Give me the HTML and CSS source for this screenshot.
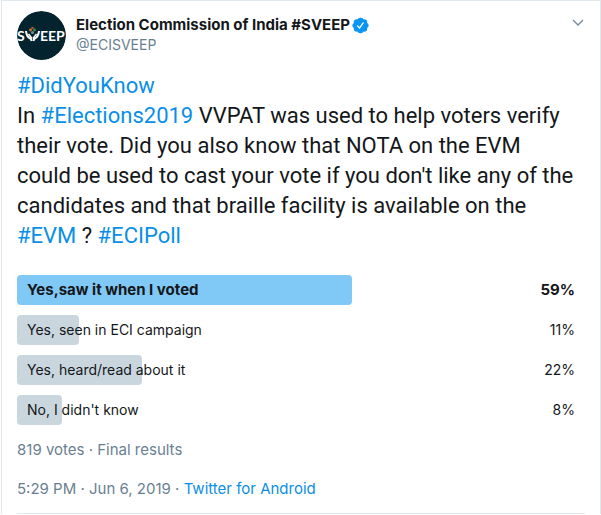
FILE: index.html
```html
<!DOCTYPE html>
<html lang="en">
<head>
    <meta charset="UTF-8">
    <meta name="viewport" content="width=device-width, initial-scale=1.0">
    <title>Election Commission of India #SVEEP</title>
    <link rel="stylesheet" href="styles.css">
</head>
<body>
    <article class="tweet">
        <header class="tweet-header">
            <svg class="avatar" viewBox="0 0 49 49" role="img" aria-label="SVEEP">
                <circle cx="24.5" cy="24.5" r="24.5" fill="#03242f"/>
                <g class="avatar-text">
                    <text x="0" y="30">S</text>
                    <text x="23" y="30">EEP</text>
                </g>
                <path d="M9 20c.3 4.500 1.500 6.500 5 8l.5 2M22 20c-.3 4.500-1.500 6.500-5 8l-.5 2" fill="none" stroke="#fff" stroke-width="2"/>
                <path d="M11.500 23l3.500 4.500M19.500 23L16 27.500" fill="none" stroke="#fff" stroke-width="1.500"/>
                <circle cx="13.500" cy="19" r="1.400" fill="#d8743c"/>
                <circle cx="15.500" cy="17" r="1.300" fill="#a9573c"/>
                <circle cx="17.500" cy="19" r="1.400" fill="#3d8b50"/>
                <circle cx="15.500" cy="21.500" r="1.500" fill="#7d8d92"/>
            </svg>
            <div class="author">
                <div class="author-name">
                    <span>Election Commission of India #SVEEP</span>
                    <svg class="verified" viewBox="0 0 24 24" role="img" aria-label="Verified account">
                        <path fill="#0a95f5" d="M23.500 12c0-1.600-.9-2.900-2.200-3.600.5-1.400.2-3-.9-4.100s-2.700-1.400-4.100-.9C15.600 2 14.200 1 12.500 1h-1C9.800 1 8.400 2 7.700 3.400c-1.400-.5-3-.2-4.100.9s-1.400 2.700-.9 4.100C1.400 9.100.5 10.400.5 12s.9 2.900 2.200 3.600c-.5 1.400-.2 3 .9 4.100s2.700 1.400 4.100.9C8.400 22 9.800 23 11.500 23h1c1.700 0 3.100-1 3.800-2.400 1.400.5 3 .2 4.100-.9s1.400-2.700.9-4.100c1.300-.7 2.200-2 2.200-3.600z"/>
                        <path fill="none" stroke="#fff" stroke-width="1.800" stroke-linecap="round" stroke-linejoin="round" d="M7.800 12.500l3 3 5-7.200"/>
                    </svg>
                </div>
                <div class="author-handle">@ECISVEEP</div>
            </div>
            <button class="menu-button" type="button" aria-label="More">
                <svg viewBox="0 0 12 8"><path d="M1 1l5 5 5-5" fill="none" stroke="#73879a" stroke-width="1.300"/></svg>
            </button>
        </header>

        <p class="tweet-text">
            <a href="#">#DidYouKnow</a><br>
            In <a href="#">#Elections2019</a> VVPAT was used to help voters verify their vote. Did you also know that NOTA on the EVM<br>
            could be used to cast your vote if you don't like any of the candidates and that braille facility is available on the <a href="#">#EVM</a> ? <a href="#">#ECIPoll</a>
        </p>

        <ul class="poll">
            <li class="poll-option winner">
                <div class="bar" style="width: 59%"></div>
                <span class="choice">Yes,saw it when I voted</span>
                <span class="percent">59%</span>
            </li>
            <li class="poll-option">
                <div class="bar" style="width: 11%"></div>
                <span class="choice">Yes, seen in ECI campaign</span>
                <span class="percent">11%</span>
            </li>
            <li class="poll-option">
                <div class="bar" style="width: 22%"></div>
                <span class="choice">Yes, heard/read about it</span>
                <span class="percent">22%</span>
            </li>
            <li class="poll-option">
                <div class="bar" style="width: 8%"></div>
                <span class="choice">No, I didn't know</span>
                <span class="percent">8%</span>
            </li>
        </ul>

        <div class="poll-summary">819 votes · Final results</div>
        <div class="tweet-meta">5:29 PM · Jun 6, 2019 · <a href="#">Twitter for Android</a></div>
    </article>
</body>
</html>
```
FILE: styles.css
```css
body {
    margin: 0;
    background-color: #fff;
    color: #14171a;
    font-family: Inter, "Liberation Sans", sans-serif;
    font-size: 14px;
    line-height: 20px;
}
a {
    color: #0a8fe6;
    text-decoration: none;
}
a:hover {
    text-decoration: underline;
}
.tweet {
    margin-left: 1px;
    padding: 10px 15px 0;
    border: 1px solid #e1e8ed;
    border-bottom: none;
}
.tweet-header {
    display: flex;
    align-items: flex-start;
    gap: 10px;
}
.avatar {
    width: 49px;
    height: 49px;
    border-radius: 50%;
    flex-shrink: 0;
}
.avatar-text {
    fill: #fff;
    font-family: Lato, sans-serif;
    font-size: 14px;
    font-weight: 700;
}
.author {
    flex: 1;
    padding-top: 4px;
}
.author-name {
    display: flex;
    align-items: center;
    gap: 2px;
    font-size: 15px;
    font-weight: 700;
}
.verified {
    width: 17px;
    height: 17px;
}
.author-handle {
    color: #697f91;
}
.menu-button {
    margin: 8px 1px 0 0;
    padding: 0;
    border: none;
    background: none;
    line-height: 0;
    cursor: pointer;
}
.menu-button svg {
    width: 12px;
    height: 8px;
}
.tweet-text {
    margin: 11px 0 24px;
    font-family: Roboto, "Liberation Sans", sans-serif;
    font-size: 22px;
    line-height: 30px;
}
.poll {
    display: grid;
    gap: 10px;
    margin: 0;
    padding: 0;
    list-style: none;
}
.poll-option {
    display: grid;
    grid-template-columns: 1fr auto;
    line-height: 30px;
}
.bar {
    grid-area: 1 / 1 / 2 / 3;
    border-radius: 4px;
    background-color: #c9d6de;
}
.choice {
    grid-area: 1 / 1;
    padding-left: 10px;
}
.percent {
    grid-area: 1 / 2;
    padding-right: 10px;
}
.winner {
    font-size: 15px;
    font-weight: 700;
}
.winner .bar {
    background-color: #80c8f5;
}
.poll-summary {
    margin-top: 15px;
    color: #697f91;
    font-size: 15px;
}
.tweet-meta {
    margin-top: 19px;
    padding-bottom: 14px;
    border-bottom: 1px solid #e1e8ed;
    color: #697f91;
    font-size: 15px;
}
```
